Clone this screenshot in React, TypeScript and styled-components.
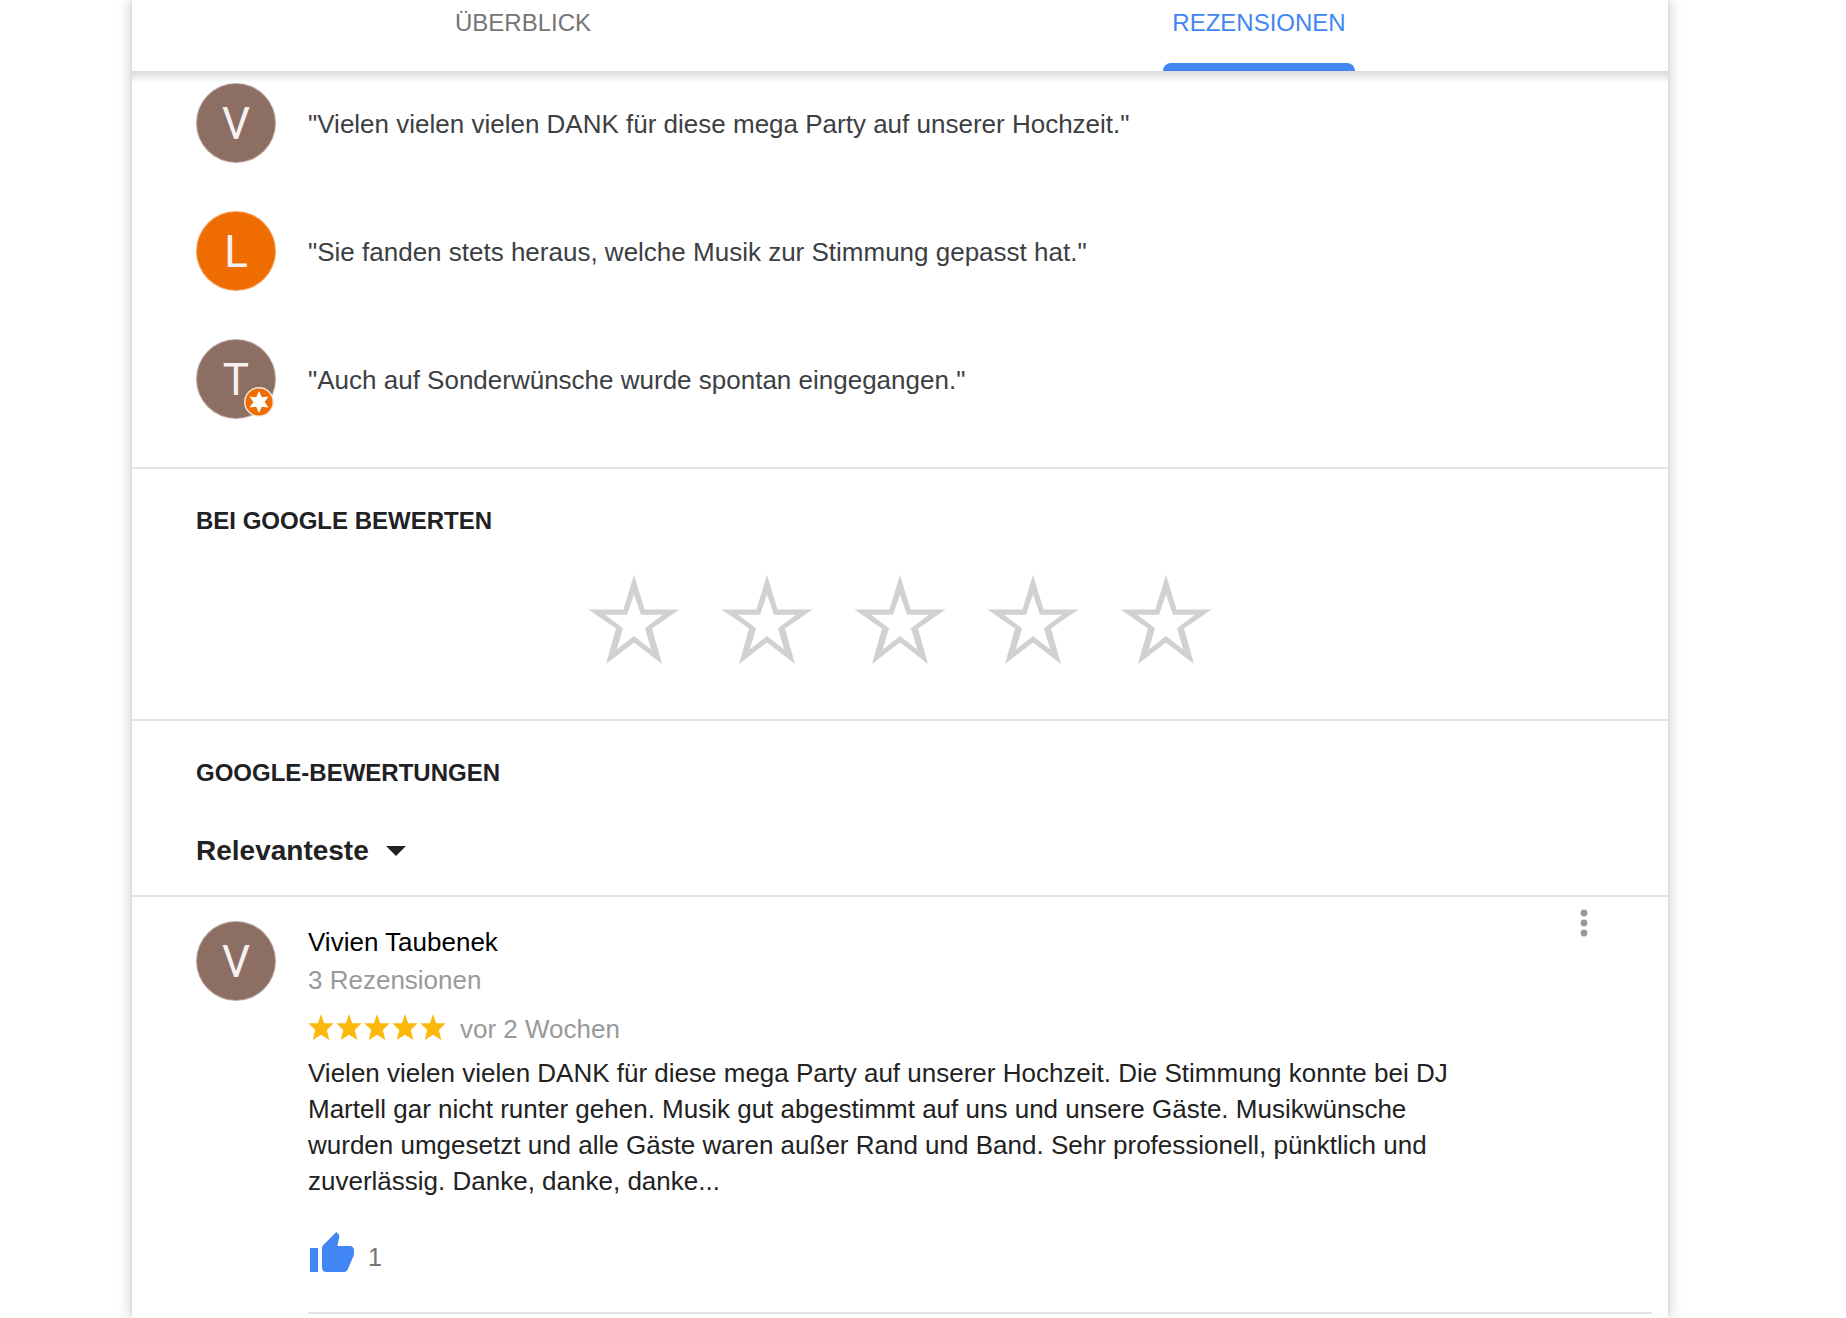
import React, { useState } from "react";
import styled, { createGlobalStyle } from "styled-components";

const GlobalStyle = createGlobalStyle`
  * { box-sizing: border-box; }
  body {
    margin: 0;
    background: #fff;
    color: #222;
    font-family: "Liberation Sans", Arial, sans-serif;
    font-size: 26px;
    line-height: 36px;
  }
  button, select { font: inherit; color: inherit; }
`;

const PlainButton = styled.button`
  display: flex;
  align-items: center;
  padding: 0;
  border: 0;
  background: none;
  cursor: pointer;
`;

const Page = styled.div`
  min-height: 100vh;
  padding: 0 178px 0 132px;
  overflow: hidden;
`;

const Card = styled.main`
  min-height: 100vh;
  background: #fff;
  box-shadow: 0 0 2px rgba(0, 0, 0, 0.12), 0 0 14px rgba(0, 0, 0, 0.24);
`;

const TabBar = styled.nav`
  position: relative;
  display: grid;
  grid-template-columns: 1fr 1fr;
  justify-items: center;
  height: 71px;
  padding: 0 41px 0 23px;

  &::after {
    content: "";
    position: absolute;
    top: 100%;
    left: 0;
    right: 0;
    height: 12px;
    background: linear-gradient(rgba(0, 0, 0, 0.14), rgba(0, 0, 0, 0.04) 75%, rgba(0, 0, 0, 0));
  }
`;

const TabColumn = styled.div`
  display: flex;
  flex-direction: column;
  justify-content: space-between;
`;

const Tab = styled(PlainButton)<{ $active: boolean }>`
  padding: 5px 9px 0;
  font-size: 24px;
  font-weight: 500;
  color: ${(p) => (p.$active ? "#4285f4" : "#757575")};
`;

const Indicator = styled.div`
  height: 8px;
  border-radius: 8px 8px 0 0;
  background: #4285f4;
`;

const Section = styled.section`
  padding: 34px 64px 0;
  border-top: 2px solid #e3e3e3;
`;

const QuoteList = styled.ul`
  display: flex;
  flex-direction: column;
  gap: 48px;
  margin: 0;
  padding: 12px 64px 48px;
  list-style: none;
`;

const QuoteRow = styled.li`
  display: flex;
  align-items: center;
  gap: 32px;
  color: #3c4043;
`;

const QuoteText = styled.span`
  padding-top: 2px;
`;

const AvatarCircle = styled.div<{ $color: string }>`
  position: relative;
  display: flex;
  flex: none;
  align-items: center;
  justify-content: center;
  width: 80px;
  height: 80px;
  padding-top: 2px;
  border: 1px solid rgba(255, 255, 255, 0.4);
  border-radius: 50%;
  background: ${(p) => p.$color};
  color: #f5f2f1;
  font-family: Roboto, "Liberation Sans", sans-serif;
  font-size: 44px;
  line-height: 78px;
`;

const Badge = styled.svg`
  position: absolute;
  right: 0;
  bottom: 0;
  width: 32px;
  height: 32px;
`;

const Heading = styled.h2`
  margin: 0;
  font-size: 24px;
  font-weight: 700;
  line-height: 36px;
  color: #202124;
`;

const StarRow = styled.div`
  display: flex;
  justify-content: center;
  gap: 41px;
  padding: 36px 0 52px;
`;

const BigStar = styled.svg`
  display: block;
  width: 92px;
  height: 92px;
  fill: #d1d1d1;
`;

const Sort = styled.label`
  display: flex;
  width: fit-content;
  align-items: center;
  gap: 17px;
  padding: 42px 0 26px;
`;

const SortSelect = styled.select`
  appearance: none;
  field-sizing: content;
  height: 36px;
  padding: 0;
  border: 0;
  background: none;
  font-size: 28px;
  font-weight: 700;
  cursor: pointer;
`;

const Caret = styled.svg`
  width: 20px;
  height: 10px;
  fill: #222;
  pointer-events: none;
`;

const Review = styled.article`
  display: flex;
  gap: 32px;
  padding: 24px 16px 0 64px;
  border-top: 2px solid #e3e3e3;
`;

const ReviewMain = styled.div`
  flex: 1;
  min-width: 0;
  padding-bottom: 34px;
  border-bottom: 2px solid #e3e3e3;
`;

const ReviewTop = styled.div`
  display: flex;
  align-items: flex-start;
  justify-content: space-between;
  padding-right: 64px;
`;

const Author = styled.div`
  padding-top: 2px;
  line-height: 38px;
  color: #000;
`;

const Muted = styled.div`
  line-height: 38px;
  color: #999;
`;

const Dots = styled(PlainButton)`
  justify-content: center;
  width: 8px;
  height: 28px;
  margin-top: -12px;
  color: #999;
`;

const RatingLine = styled.div`
  display: flex;
  align-items: center;
  gap: 14px;
  padding-top: 11px;
`;

const SmallStars = styled.div`
  display: flex;
  gap: 2px;
  padding-bottom: 4px;
`;

const SmallStar = styled.svg`
  width: 26px;
  height: 26px;
  fill: #fbb80a;
`;

const ReviewText = styled.p`
  margin: 7px 0 0;
  padding-right: 168px;
`;

const Like = styled(PlainButton)`
  gap: 12px;
  margin-top: 31px;
  font-size: 25px;
  color: #757575;
`;

const LikeCount = styled.span`
  padding-top: 6px;
`;

const Thumb = styled.svg`
  width: 48px;
  height: 48px;
  fill: #4285f4;
`;

const BROWN = "#8d6e63";
const ORANGE = "#ef6c00";

const quotes = [
  { letter: "V", color: BROWN, text: "\"Vielen vielen vielen DANK für diese mega Party auf unserer Hochzeit.\"" },
  { letter: "L", color: ORANGE, text: "\"Sie fanden stets heraus, welche Musik zur Stimmung gepasst hat.\"" },
  { letter: "T", color: BROWN, badge: true, text: "\"Auch auf Sonderwünsche wurde spontan eingegangen.\"" },
];

function Avatar({ letter, color, badge }: { letter: string; color: string; badge?: boolean }) {
  return (
    <AvatarCircle $color={color}>
      {letter}
      {badge && (
        <Badge viewBox="0 0 32 32" aria-hidden="true">
          <circle cx="16" cy="16" r="15" fill="#f3e6de" />
          <circle cx="16" cy="16" r="13.5" fill={ORANGE} />
          <path
            fill="#fff"
            d="M16 5l2.8 6.2 6.7-.7-3.9 5.5 3.9 5.5-6.7-.7L16 27l-2.8-6.2-6.7.7 3.9-5.5-3.9-5.5 6.7.7z"
          />
        </Badge>
      )}
    </AvatarCircle>
  );
}

export default function App() {
  const [tab, setTab] = useState("REZENSIONEN");
  return (
    <>
      <GlobalStyle />
      <Page>
        <Card>
          <TabBar>
            {["ÜBERBLICK", "REZENSIONEN"].map((name) => (
              <TabColumn key={name}>
                <Tab $active={tab === name} onClick={() => setTab(name)}>
                  {name}
                </Tab>
                {tab === name && <Indicator />}
              </TabColumn>
            ))}
          </TabBar>

          <QuoteList>
            {quotes.map((q) => (
              <QuoteRow key={q.letter}>
                <Avatar letter={q.letter} color={q.color} badge={q.badge} />
                <QuoteText>{q.text}</QuoteText>
              </QuoteRow>
            ))}
          </QuoteList>

          <Section>
            <Heading>BEI GOOGLE BEWERTEN</Heading>
            <StarRow>
              {[1, 2, 3, 4, 5].map((n) => (
                <PlainButton key={n} aria-label={`${n} Sterne`}>
                  <BigStar viewBox="-46 0 92 92">
                    <path
                      fillRule="evenodd"
                      d="M0 0L10.6 34.5H45.6L18 53.6L28 89L0 67.4L-28 89L-18 53.6L-45.6 34.5H-10.6ZM0 19.5L-7 39.7H-29L-10.9 53.2L-17.3 74.5L0 61L17.3 74.5L10.9 53.2L29 39.7H7Z"
                    />
                  </BigStar>
                </PlainButton>
              ))}
            </StarRow>
          </Section>

          <Section>
            <Heading>GOOGLE-BEWERTUNGEN</Heading>
            <Sort>
              <SortSelect aria-label="Sortieren" defaultValue="Relevanteste">
                <option>Relevanteste</option>
                <option>Neueste</option>
              </SortSelect>
              <Caret viewBox="0 0 20 10" aria-hidden="true">
                <path d="M0 0h20L10 10z" />
              </Caret>
            </Sort>
          </Section>

          <Review>
            <Avatar letter="V" color={BROWN} />
            <ReviewMain>
              <ReviewTop>
                <Author>Vivien Taubenek</Author>
                <Dots aria-label="Mehr">
                  <svg width="8" height="28" viewBox="0 0 8 28" fill="currentColor">
                    <circle cx="4" cy="4" r="3.4" />
                    <circle cx="4" cy="14" r="3.4" />
                    <circle cx="4" cy="24" r="3.4" />
                  </svg>
                </Dots>
              </ReviewTop>
              <Muted>3 Rezensionen</Muted>
              <RatingLine>
                <SmallStars role="img" aria-label="5 von 5 Sternen">
                  {[1, 2, 3, 4, 5].map((n) => (
                    <SmallStar key={n} viewBox="0 0 26 26">
                      <path d="M13 0L16.1 9.2H25.6L18.8 16L21.3 26L13 20.8L4.7 26L7.2 16L.4 9.2H9.9z" />
                    </SmallStar>
                  ))}
                </SmallStars>
                <Muted>vor 2 Wochen</Muted>
              </RatingLine>
              <ReviewText>
                Vielen vielen vielen DANK für diese mega Party auf unserer Hochzeit. Die Stimmung
                konnte bei DJ Martell gar nicht runter gehen. Musik gut abgestimmt auf uns und
                unsere Gäste. Musikwünsche wurden umgesetzt und alle Gäste waren außer Rand und
                Band. Sehr professionell, pünktlich und zuverlässig. Danke, danke, danke...
              </ReviewText>
              <Like aria-label="Gefällt mir, 1">
                <Thumb viewBox="0 0 24 24" aria-hidden="true">
                  <path d="M1 21h4V9H1v12zm22-11c0-1.1-.9-2-2-2h-6.31l.95-4.57.03-.32c0-.41-.17-.79-.44-1.06L14.17 1 7.59 7.59C7.22 7.95 7 8.45 7 9v10c0 1.1.9 2 2 2h9c.83 0 1.54-.5 1.84-1.22l3.02-7.05c.09-.23.14-.47.14-.73v-2z" />
                </Thumb>
                <LikeCount>1</LikeCount>
              </Like>
            </ReviewMain>
          </Review>
        </Card>
      </Page>
    </>
  );
}
